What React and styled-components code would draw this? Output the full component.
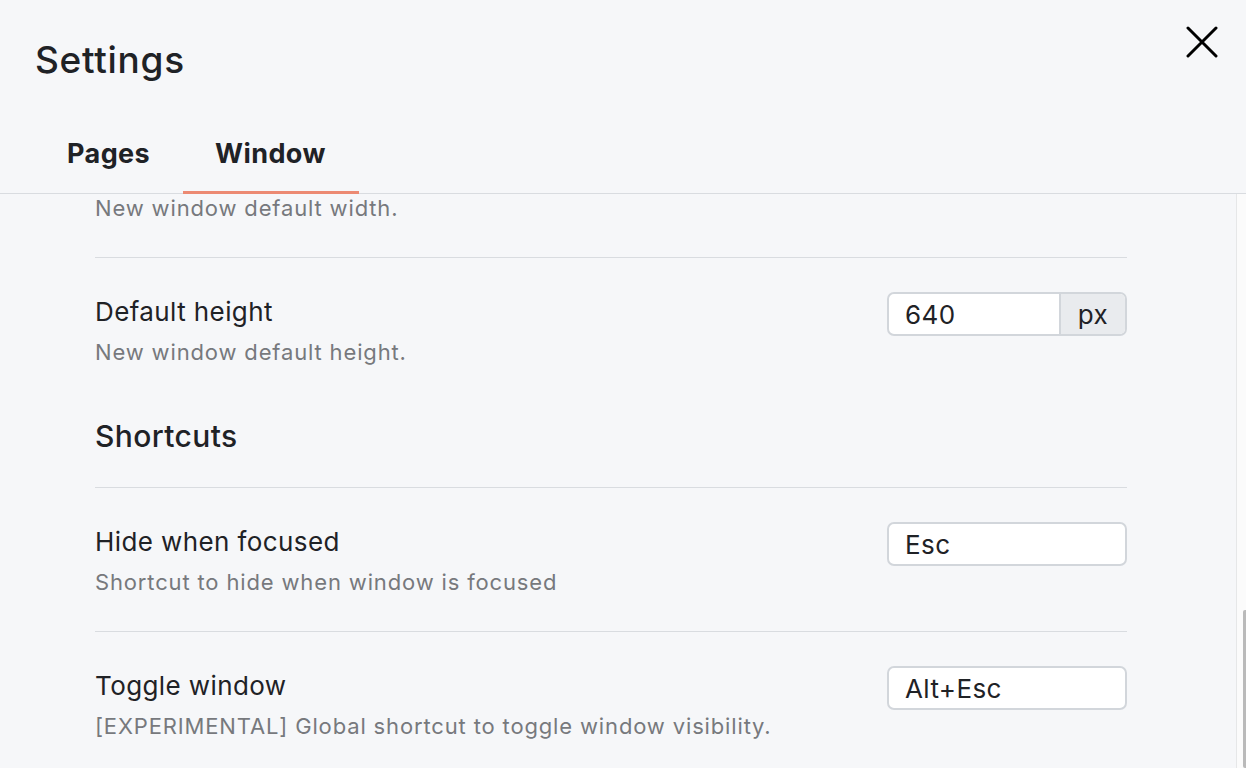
import React, { useEffect, useRef } from 'react';
import styled, { createGlobalStyle } from 'styled-components';

const GlobalStyle = createGlobalStyle`
  html, body {
    margin: 0;
    padding: 0;
    height: 100%;
    background: #f6f7f9;
  }
  body {
    font-family: Inter, "Noto Sans", sans-serif;
    color: #1f2226;
  }
  #root {
    height: 100%;
  }
`

const Page = styled.div`
  display: flex;
  flex-direction: column;
  height: 100vh;
  background: #f6f7f9;
  overflow: hidden;
`

const Header = styled.header`
  flex: none;
  border-bottom: 1px solid #d9dce0;
`

const TitleRow = styled.div`
  display: flex;
  justify-content: space-between;
  align-items: flex-start;
  padding: 26px 28px 0 35px;
`

const Title = styled.h1`
  margin: 10px 0 0;
  font-size: 37px;
  line-height: 48px;
  font-weight: 500;
  letter-spacing: 0.7px;
`

const CloseButton = styled.button`
  width: 32px;
  height: 32px;
  padding: 0;
  border: none;
  background: none;
  color: #000;
  cursor: pointer;
  svg {
    display: block;
  }
`

const Tabs = styled.nav`
  display: flex;
  padding-left: 35px;
  margin-top: 36px;
  margin-bottom: -1px;
`

const Tab = styled.button`
  padding: 17px 33px 20px 32px;
  border: none;
  border-bottom: 3px solid ${p => (p.$active ? '#ec8a73' : 'transparent')};
  background: none;
  font-family: inherit;
  font-size: 27px;
  line-height: 34px;
  font-weight: 700;
  letter-spacing: 0.4px;
  color: #1f2226;
  cursor: pointer;
`

const Body = styled.div`
  position: relative;
  flex: 1;
  min-height: 0;
  display: flex;
`

const ScrollArea = styled.main`
  flex: 1;
  overflow-y: auto;
  scrollbar-width: none;
  &::-webkit-scrollbar {
    display: none;
  }
`

/* overlay scrollbar drawn over the right edge */
const ScrollTrack = styled.div`
  position: absolute;
  top: 0;
  right: 0;
  bottom: 0;
  width: 9px;
  background: #fbfbfb;
  border-left: 1px solid #e6e7e8;
`

const ScrollThumb = styled.div`
  position: absolute;
  right: 0;
  bottom: 0;
  width: 3px;
  border-radius: 2px 0 0 2px;
  background: #bababa;
`

const Content = styled.div`
  width: 1032px;
  margin-left: 95px;
`

const Section = styled.section``

const SectionTitle = styled.h2`
  margin: 0;
  padding: 15px 0 31px;
  font-size: 30px;
  line-height: 40px;
  font-weight: 500;
  letter-spacing: 0.4px;
  border-bottom: 1px solid #d9dce0;
`

const Row = styled.div`
  display: flex;
  justify-content: space-between;
  align-items: flex-start;
  padding: 34px 0 29px;
  & + & {
    border-top: 1px solid #d9dce0;
  }
  ${Section}:last-child &:last-child {
    padding-bottom: 22px;
  }
`

const Label = styled.div`
  display: flex;
  flex-direction: column;
`

const RowTitle = styled.div`
  font-size: 26px;
  line-height: 40px;
  letter-spacing: 0.4px;
`

const RowDesc = styled.div`
  font-size: 22px;
  line-height: 40px;
  letter-spacing: 0.85px;
  color: #77797d;
`

const InputGroup = styled.div`
  display: flex;
  width: 240px;
  height: 44px;
  box-sizing: border-box;
  border: 2px solid #d2d6db;
  border-radius: 7px;
  background: #fff;
  overflow: hidden;
`

const Field = styled.input`
  flex: 1;
  min-width: 0;
  border: none;
  outline: none;
  padding: 0 0 0 16px;
  background: transparent;
  font-family: inherit;
  font-size: 26px;
  letter-spacing: 0.4px;
  color: #1f2226;
`

const Addon = styled.span`
  display: flex;
  align-items: center;
  justify-content: center;
  width: 64px;
  border-left: 2px solid #d2d6db;
  background: #e9ebee;
  font-size: 26px;
  letter-spacing: 0.4px;
  color: #1f2226;
`

const sections = [
  {
    title: 'General',
    rows: [
      { title: 'Start at login', desc: 'Launch the app when you log in.', value: 'Off' },
      { title: 'Show in tray', desc: 'Show an icon in the system tray.', value: 'On' },
      { title: 'Language', desc: 'Interface language.', value: 'English' },
    ],
  },
  {
    title: 'Appearance',
    rows: [
      { title: 'Theme', desc: 'Color theme of the window.', value: 'System' },
      { title: 'Zoom', desc: 'Default zoom level for pages.', value: '100', unit: '%' },
      { title: 'Tab bar', desc: 'Position of the tab bar.', value: 'Top' },
    ],
  },
  {
    title: 'Behaviour',
    rows: [
      { title: 'Hide on blur', desc: 'Hide the window when it loses focus.', value: 'Off' },
      { title: 'Always on top', desc: 'Keep the window above others.', value: 'Off' },
    ],
  },
  {
    title: 'Window',
    rows: [
      { title: 'Default width', desc: 'New window default width.', value: '1000', unit: 'px' },
      { title: 'Default height', desc: 'New window default height.', value: '640', unit: 'px' },
    ],
  },
  {
    title: 'Shortcuts',
    rows: [
      { title: 'Hide when focused', desc: 'Shortcut to hide when window is focused', value: 'Esc' },
      { title: 'Toggle window', desc: '[EXPERIMENTAL] Global shortcut to toggle window visibility.', value: 'Alt+Esc' },
    ],
  },
]

function CloseIcon() {
  return (
    <svg width="32" height="32" viewBox="0 0 32 32" fill="none" stroke="currentColor" strokeWidth="3" strokeLinecap="round">
      <path d="M2 2 30 30M30 2 2 30" />
    </svg>
  )
}

export default function App() {
  const scrollRef = useRef(null)

  useEffect(() => {
    const el = scrollRef.current
    if (el) el.scrollTop = el.scrollHeight
  }, [])

  return (
    <Page>
      <GlobalStyle />
      <Header>
        <TitleRow>
          <Title>Settings</Title>
          <CloseButton aria-label="Close"><CloseIcon /></CloseButton>
        </TitleRow>
        <Tabs>
          <Tab>Pages</Tab>
          <Tab $active>Window</Tab>
        </Tabs>
      </Header>
      <Body>
        <ScrollArea ref={scrollRef}>
          <Content>
            {sections.map(section => (
              <Section key={section.title}>
                <SectionTitle>{section.title}</SectionTitle>
                {section.rows.map(row => (
                  <Row key={row.title}>
                    <Label>
                      <RowTitle>{row.title}</RowTitle>
                      <RowDesc>{row.desc}</RowDesc>
                    </Label>
                    <InputGroup>
                      <Field defaultValue={row.value} />
                      {row.unit && <Addon>{row.unit}</Addon>}
                    </InputGroup>
                  </Row>
                ))}
              </Section>
            ))}
          </Content>
        </ScrollArea>
        <ScrollTrack>
          <ScrollThumb style={{ height: 158 }} />
        </ScrollTrack>
      </Body>
    </Page>
  )
}
